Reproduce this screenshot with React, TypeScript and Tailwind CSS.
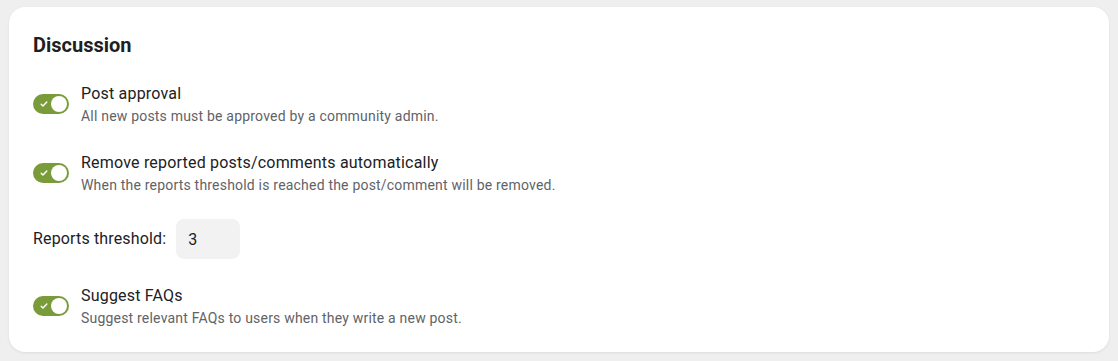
import React, { useState } from "react";

interface ToggleRowProps {
  label: string;
  description: string;
  defaultOn?: boolean;
}

const Toggle: React.FC<{ on: boolean; onChange: () => void }> = ({ on, onChange }) => (
  <button
    type="button"
    onClick={onChange}
    className={`relative flex h-5 w-9 shrink-0 items-center rounded-full p-0.5 ${
      on ? "bg-[#7a9b3a]" : "bg-[#c4c4c4]"
    }`}
  >
    {on && (
      <svg
        className="absolute left-[7px] top-[6px] h-2 w-2 text-white"
        viewBox="0 0 10 10"
        fill="none"
        stroke="currentColor"
        strokeWidth={1.8}
        strokeLinecap="round"
        strokeLinejoin="round"
      >
        <path d="M1.5 5.2l2.2 2.2L8.5 2.6" />
      </svg>
    )}
    <span className={`h-4 w-4 rounded-full bg-white ${on ? "ml-auto" : ""}`} />
  </button>
);

const ToggleRow: React.FC<ToggleRowProps> = ({ label, description, defaultOn = true }) => {
  const [on, setOn] = useState(defaultOn);
  return (
    <div className="flex items-center">
      <Toggle on={on} onChange={() => setOn(!on)} />
      <div className="ml-3">
        <div className="text-base leading-6 tracking-[0.2px] text-[#202124]">{label}</div>
        <div className="text-sm leading-5 tracking-[0.2px] text-[#5f6368]">{description}</div>
      </div>
    </div>
  );
};

export default function App() {
  const [threshold, setThreshold] = useState("3");

  return (
    <div
      className="min-h-[361px] w-full bg-[#efefef] px-[9px] pt-[7px]"
      style={{ fontFamily: "Roboto, 'Liberation Sans', sans-serif" }}
    >
      <div className="rounded-2xl bg-white px-6 pb-6 pt-6 shadow-[0_1px_3px_rgba(0,0,0,0.08)]">
        <h2 className="mb-[23px] text-xl font-bold leading-7 text-[#1f1f1f]">Discussion</h2>

        <ToggleRow
          label="Post approval"
          description="All new posts must be approved by a community admin."
        />

        <div className="mt-[25px]">
          <ToggleRow
            label="Remove reported posts/comments automatically"
            description="When the reports threshold is reached the post/comment will be removed."
          />
        </div>

        <div className="mt-6 flex items-center">
          <label className="text-base leading-6 tracking-[0.15px] text-[#202124]">
            Reports threshold:
          </label>
          <input
            value={threshold}
            onChange={(e) => setThreshold(e.target.value)}
            className="ml-2.5 h-10 w-16 rounded-lg bg-[#f2f2f2] px-3 text-base text-[#202124] outline-none"
          />
        </div>

        <div className="mt-[25px]">
          <ToggleRow
            label="Suggest FAQs"
            description="Suggest relevant FAQs to users when they write a new post."
          />
        </div>
      </div>
    </div>
  );
}
